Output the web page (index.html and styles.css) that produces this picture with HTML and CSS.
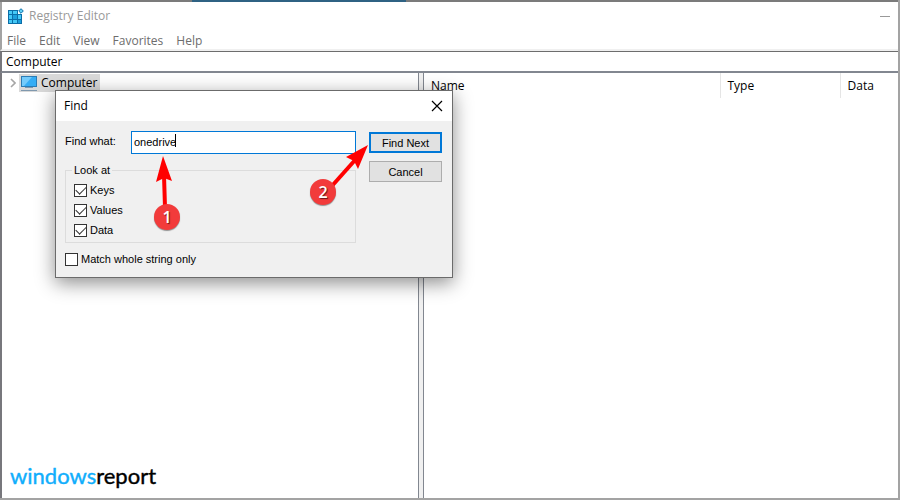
FILE: index.html
```html
<!DOCTYPE html>
<html lang="en">
<head>
    <meta charset="UTF-8">
    <meta name="viewport" content="width=device-width, initial-scale=1.0">
    <title>Registry Editor</title>
    <link rel="stylesheet" href="styles.css">
</head>
<body>

    <div class="window">
        <div class="top-strip"></div>
        <header class="titlebar">
            <svg class="app-icon" width="16" height="16" viewBox="0 0 16 16">
                <path fill="#0b6ea8" d="M0 2h10v4h4v10H0z"/>
                <path fill="#45c8f5" d="M1 3h3v3H1zM5 3h4v3H5zM1 7h3v4H1zM1 12h3v3H1zM5 12h4v3H5zM10 7h3v4h-3z"/>
                <path fill="#1c9fdc" d="M5 7h4v4H5zM10 12h3v3h-3z"/>
                <path fill="#5fd0f5" stroke="#0b6ea8" d="M13 .7l2.3 2.3L13 5.3 10.700 3z"/>
            </svg>
            <span class="app-name">Registry Editor</span>
            <button class="minimize" aria-label="Minimize"></button>
        </header>

        <nav class="menu">
            <button>File</button>
            <button>Edit</button>
            <button>View</button>
            <button>Favorites</button>
            <button>Help</button>
        </nav>

        <input class="address" type="text" value="Computer" aria-label="Address">

        <main class="panes">
            <section class="tree">
                <div class="tree-row">
                    <svg class="chevron" width="6" height="10" viewBox="0 0 6 10">
                        <path fill="none" stroke="#a6a6a6" stroke-width="1.600" d="M1 1l4 4-4 4"/>
                    </svg>
                    <span class="tree-item">
                        <svg width="17" height="16" viewBox="0 0 17 16">
                            <path fill="#2b7cb5" d="M0 1h16v11H0z"/>
                            <path fill="#35adf5" d="M1 2h14v9H1z"/>
                            <path fill="#74cbfb" d="M1 2h10L3 11H1z"/>
                            <path fill="#7f98ae" d="M4 12h8v1H4zM0 15h16v1H0z"/>
                        </svg>
                        Computer
                    </span>
                </div>
            </section>
            <section class="values">
                <table>
                    <thead>
                        <tr><th>Name</th><th>Type</th><th>Data</th></tr>
                    </thead>
                </table>
            </section>
        </main>

        <div class="brand"><span class="brand-blue">windows</span>report</div>

        <form class="dialog" onsubmit="return false">
            <div class="dialog-title">
                <span>Find</span>
                <button type="button" class="close" aria-label="Close">
                    <svg width="12" height="12" viewBox="0 0 12 12">
                        <path fill="none" stroke="#000" stroke-width="1.200" d="M1 1l10 10M11 1L1 11"/>
                    </svg>
                </button>
            </div>
            <div class="dialog-body">
                <div class="fields">
                    <div class="find-row">
                        <label for="findWhat">Find what:</label>
                        <div class="find-box">
                            <input type="text" id="findWhat" value="onedrive">
                            <span class="caret"></span>
                        </div>
                    </div>
                    <fieldset>
                        <legend>Look at</legend>
                        <label><input type="checkbox" checked>Keys</label>
                        <label><input type="checkbox" checked>Values</label>
                        <label><input type="checkbox" checked>Data</label>
                    </fieldset>
                    <label class="whole"><input type="checkbox">Match whole string only</label>
                </div>
                <div class="actions">
                    <button type="submit" class="primary">Find Next</button>
                    <button type="button">Cancel</button>
                </div>
            </div>

            <!-- step arrows -->
            <svg class="arrows" width="398" height="188" viewBox="55 90 398 188">
                <path stroke="#f00" stroke-width="4" d="M165 208L164 175"/>
                <path fill="#f00" d="M163 156l9 25-8-3-8 4z"/>
                <path stroke="#f00" stroke-width="4" d="M331 187L356 159"/>
                <path fill="#f00" d="M368 145l-10 24-4-8-8-4z"/>
            </svg>
            <span class="step step-one">1</span>
            <span class="step step-two">2</span>
        </form>
    </div>

</body>
</html>
```

FILE: styles.css
```css
* {
    box-sizing: border-box;
}
body {
    margin: 0;
    font-family: "Open Sans", "Noto Sans", sans-serif;
    font-size: 12px;
    line-height: 16px;
    color: #000;
}
button, input {
    font: inherit;
    color: inherit;
}
.window {
    position: relative;
    display: flex;
    flex-direction: column;
    height: 100vh;
    border-right: 2px solid #a3a3a3;
    border-bottom: 2px solid #a3a3a3;
    background: #fff;
}
.top-strip {
    height: 2px;
    background: linear-gradient(to right, #7b7b7b 192px, #2f6283 192px, #2f6283 406px, #7b7b7b 406px);
}
.titlebar {
    display: flex;
    align-items: center;
    gap: 5px;
    height: 28px;
    padding: 0 8px 0 6px;
    border-left: 2px solid #a3a3a3;
    color: #999;
}
.minimize {
    width: 10px;
    height: 1px;
    margin-left: auto;
    padding: 0;
    border: 0;
    background: #999;
}
.menu {
    display: flex;
    align-items: flex-end;
    gap: 13px;
    height: 21px;
    padding: 0 5px;
    border-left: 2px solid #a3a3a3;
    border-bottom: 2px solid #f0f0f0;
}
.menu button {
    padding: 0;
    border: 0;
    background: none;
    color: #6d6d6d;
}
.address {
    height: 22px;
    padding: 0 4px;
    border: 0;
    border-left: 2px solid #77777c;
    border-top: 1px solid #6d6d6d;
    border-bottom: 2px solid #828790;
    outline: none;
}
.panes {
    flex: 1;
    display: flex;
    border-left: 2px solid #77777c;
    background: #f0f0f0;
}
.tree {
    width: 417px;
    border-right: 1px solid #828790;
    background: #fff;
}
.tree-row {
    display: flex;
    align-items: center;
    gap: 3px;
    padding: 1px 0 0 8px;
}
.tree-item {
    display: flex;
    align-items: center;
    gap: 3px;
    height: 18px;
    padding: 0 2px;
    background: #d9d9d9;
}
.values {
    flex: 1;
    margin-left: 4px;
    border-left: 1px solid #828790;
    background: #fff;
}
.values table {
    width: 100%;
    table-layout: fixed;
    border-collapse: collapse;
}
.values th {
    height: 25px;
    padding: 0 0 0 7px;
    border-left: 1px solid #e5e5e5;
    font-weight: normal;
    text-align: left;
}
.values th:first-child {
    width: 296px;
    border-left: 0;
}
.values th:nth-child(2) {
    width: 120px;
}
.brand {
    position: absolute;
    left: 10px;
    bottom: 8px;
    font-family: Lato, sans-serif;
    font-size: 22px;
    line-height: 28px;
    -webkit-text-stroke: 0.4px;
}
.brand-blue {
    color: #10aefc;
}

/* Find window */
.dialog {
    position: absolute;
    left: 55px;
    top: 90px;
    width: 398px;
    border: 1px solid #6b6b6b;
    background: #f0f0f0;
    box-shadow: 0 5px 18px rgba(0, 0, 0, 0.45);
    font-family: "Liberation Sans", Arial, sans-serif;
    font-size: 11px;
}
.dialog-title {
    display: flex;
    align-items: center;
    justify-content: space-between;
    height: 30px;
    padding: 0 9px 0 8px;
    background: #fff;
    font-family: "Open Sans", "Noto Sans", sans-serif;
    font-size: 12px;
}
.close {
    display: flex;
    padding: 0;
    border: 0;
    background: none;
}
.dialog-body {
    display: flex;
    justify-content: space-between;
    padding: 10px 10px 10px 9px;
}
.fields {
    width: 291px;
}
.find-row {
    display: flex;
    justify-content: space-between;
    line-height: 20px;
}
.find-box {
    display: flex;
    width: 225px;
    height: 23px;
    padding: 2px 2px 0;
    border: 1px solid #0078d7;
    background: #fff;
}
.find-box input {
    width: 41px;
    height: 16px;
    padding: 0;
    border: 0;
    outline: none;
    background: none;
}
.caret {
    width: 1px;
    height: 13px;
    background: #000;
}
fieldset {
    display: flex;
    flex-direction: column;
    gap: 4px;
    margin: 8px 0;
    padding: 4px 8px;
    border: 1px solid #dcdcdc;
}
legend {
    padding: 0 2px;
    margin-left: -2px;
}
fieldset label, .whole {
    display: flex;
    align-items: center;
    gap: 3px;
}
input[type="checkbox"] {
    appearance: none;
    width: 13px;
    height: 13px;
    margin: 0;
    border: 1px solid #333;
    background: #fff;
}
input[type="checkbox"]:checked::before {
    content: "";
    display: block;
    width: 9px;
    height: 5px;
    margin: 2px 1px;
    border: solid #333;
    border-width: 0 0 1px 1px;
    transform: translateY(-1px) rotate(-45deg);
}
.actions {
    display: flex;
    flex-direction: column;
    gap: 8px;
    width: 73px;
    padding-top: 1px;
}
.actions button {
    height: 21px;
    padding: 0;
    border: 1px solid #adadad;
    background: #e1e1e1;
}
.actions .primary {
    border: 2px solid #0078d7;
}
.arrows {
    position: absolute;
    left: -1px;
    top: -1px;
}
.step {
    position: absolute;
    width: 26px;
    height: 26px;
    border-radius: 50%;
    background: #f23b3b;
    box-shadow: 0 1px 1px rgba(0, 0, 0, 0.4);
    color: #fff;
    font-family: "Open Sans", sans-serif;
    font-size: 16px;
    font-weight: 600;
    line-height: 26px;
    text-align: center;
    text-shadow: 1px 1px 1px rgba(0, 0, 0, 0.6);
}
.step-one {
    left: 98px;
    top: 113px;
}
.step-two {
    left: 254px;
    top: 88px;
}
```
